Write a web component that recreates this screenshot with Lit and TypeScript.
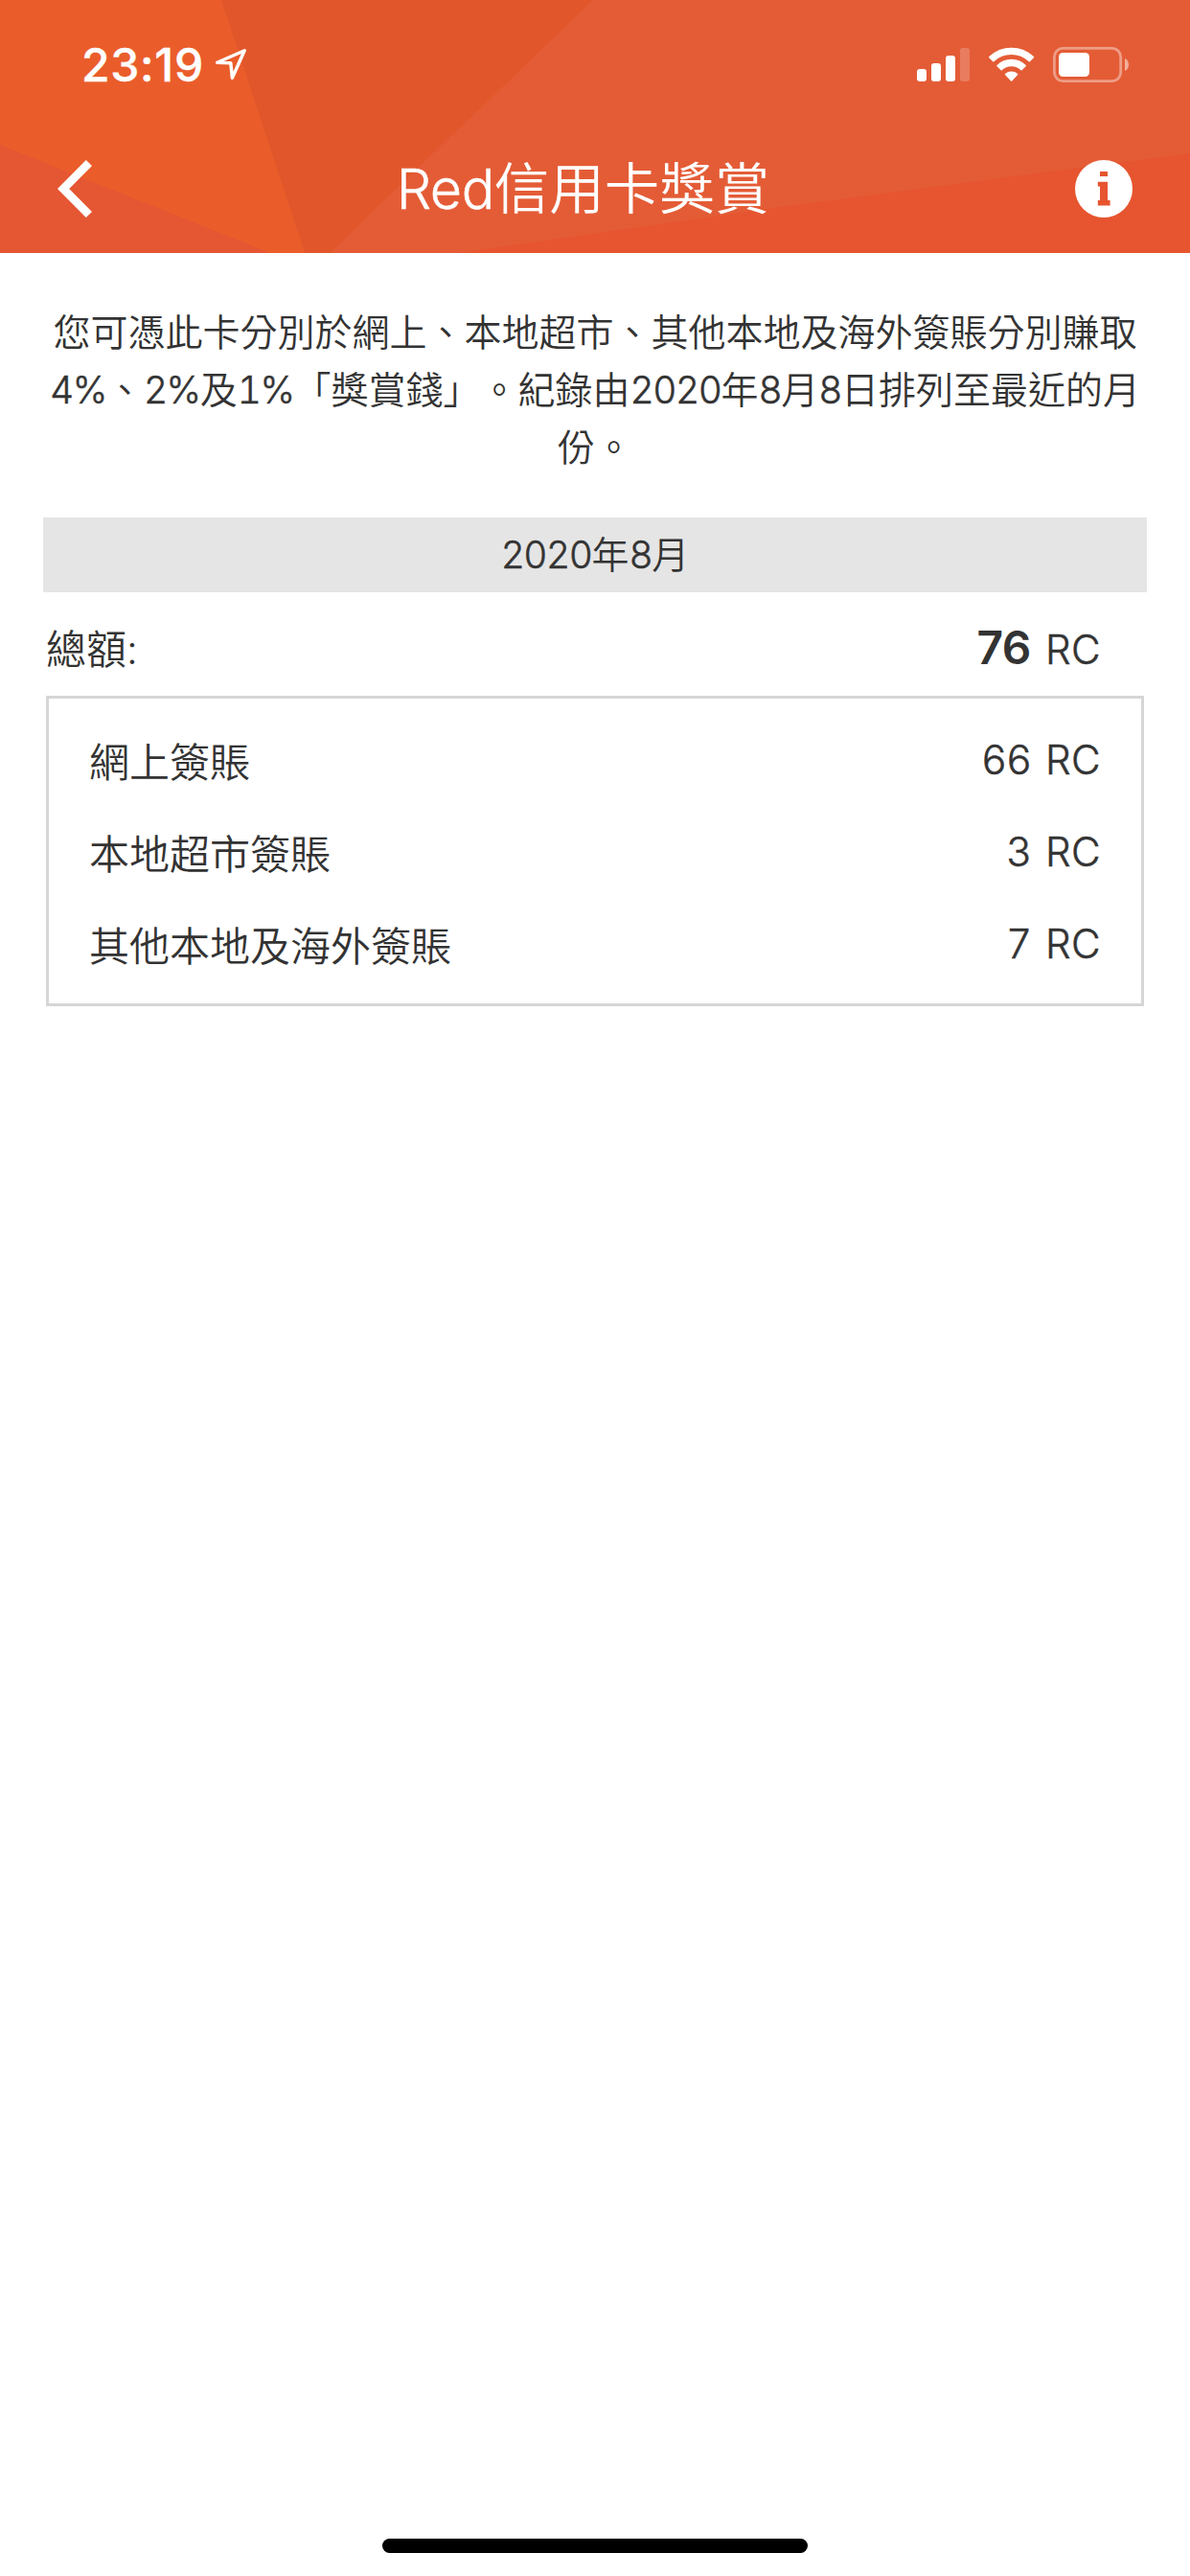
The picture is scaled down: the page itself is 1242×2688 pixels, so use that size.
import { LitElement, html, css, svg } from "lit";
import { customElement, property } from "lit/decorators.js";

interface RewardLine {
  label: string;
  amount: string;
}

const LINES: RewardLine[] = [
  { label: "網上簽賬", amount: "66" },
  { label: "本地超市簽賬", amount: "3" },
  { label: "其他本地及海外簽賬", amount: "7" },
];

@customElement("status-bar")
class StatusBar extends LitElement {
  static styles = css`
    :host {
      display: flex;
      justify-content: space-between;
      height: 132px;
      padding: 0 64px 0 85px;
      box-sizing: border-box;
      color: #fff;
    }
    .left {
      display: flex;
      align-items: flex-start;
    }
    .time {
      width: 139px;
      margin-top: 39px;
      font: 500 48px/58px Inter, "Liberation Sans", sans-serif;
      letter-spacing: 0.7px;
      white-space: nowrap;
      -webkit-text-stroke: 0.4px #fff;
    }
    .arrow {
      margin-top: 50px;
    }
    .icons {
      display: block;
      margin-top: 48px;
    }
  `;

  render() {
    return html`
      <div class="left">
        <span class="time">23:19</span>
        <svg class="arrow" width="34" height="34" viewBox="0 0 34 34" fill="none" stroke="#fff"
          stroke-width="3.4" stroke-linejoin="round">
          <path d="M31.2 2.8 L2.7 15.2 L16.8 15.8 L18.4 31.2 Z" />
        </svg>
      </div>
      <svg class="icons" width="221" height="40" viewBox="957 48 221 40">
        ${[
          [957, 72],
          [972, 66],
          [987, 58],
          [1002, 50],
        ].map(
          ([x, y], i) => svg`<rect x=${x} y=${y} width="10" height=${85 - y} rx="3"
            fill="#fff" opacity=${i === 3 ? 0.2 : 1} />`
        )}
        <g fill="#fff" stroke="#fff" stroke-width="1.6" stroke-linejoin="round">
          <path d="M1032.8 59.7 A33.2 33.2 0 0 1 1078.4 59.7 L1074.3 63.6 A27.2 27.2 0 0 0 1036.8 63.6 Z" />
          <path d="M1041.1 68.6 A20.7 20.7 0 0 1 1070.1 68.6 L1066 72.6 A15 15 0 0 0 1045.2 72.6 Z" />
          <path d="M1049.6 77.5 A9 9 0 0 1 1061.6 77.5 L1055.6 83.9 Z" />
        </g>
        <rect x="1100.4" y="50.4" width="69.3" height="34.2" rx="9" fill="none" stroke="#fff"
          stroke-width="2.8" opacity="0.4" />
        <rect x="1105" y="55" width="32" height="25" rx="4.5" fill="#fff" />
        <path d="M1174 61 C1179.3 63 1179.3 72 1174 74 Z" fill="#fff" opacity="0.5" />
      </svg>
    `;
  }
}

@customElement("nav-bar")
class NavBar extends LitElement {
  static styles = css`
    :host {
      display: grid;
      grid-template-columns: 200px 1fr 200px;
      align-items: center;
      height: 130px;
      padding: 0 60px;
      color: #fff;
    }
    .title {
      margin: 0;
      padding-right: 25px;
      text-align: center;
      font: 350 57.5px/86px Inter, "Noto Sans CJK TC", sans-serif;
      white-space: nowrap;
    }
    .latin {
      letter-spacing: -0.5px;
      -webkit-text-stroke: 0.5px #fff;
    }
    .info {
      justify-self: end;
    }
    svg {
      display: block;
    }
  `;

  @property() latin = "";
  @property() heading = "";

  render() {
    return html`
      <svg width="37" height="60" viewBox="0 0 37 60" fill="#fff">
        <path d="M29.8 0 L36 6 L12.2 30 L36 54 L29.8 60 L0 30 Z" />
      </svg>
      <h1 class="title"><span class="latin">${this.latin}</span>${this.heading}</h1>
      <svg class="info" width="60" height="60" viewBox="0 0 60 60">
        <circle cx="30" cy="30" r="30" fill="#fff" />
        <path fill="#e6552f"
          d="M26 11.9 H34 V17.1 H26 Z M23.8 22.7 H34 V42.1 H36.6 V47.6 H23.8 V42.1 H26 V27.6 H23.8 Z" />
      </svg>
    `;
  }
}

@customElement("app-root")
class AppRoot extends LitElement {
  static styles = css`
    :host {
      display: flex;
      flex-direction: column;
      width: 1242px;
      height: 2688px;
      background: #fff;
      color: #333;
      font-family: Inter, "Noto Sans CJK TC", sans-serif;
      font-weight: 360;
      text-spacing-trim: space-all;
      overflow: hidden;
    }
    .header {
      position: relative;
      height: 264px;
      flex: none;
    }
    .facets {
      position: absolute;
      inset: 0;
    }
    status-bar,
    nav-bar {
      position: relative;
    }
    .content {
      flex: 1;
      padding: 53px 45px 0;
    }
    .intro {
      margin: 0 0 43px;
      height: 180px;
      text-align: center;
      font-size: 39px;
      line-height: 60px;
      white-space: nowrap;
    }
    .num {
      font-variant-numeric: tabular-nums;
      letter-spacing: -1.5px;
      -webkit-text-stroke: 0.5px #333;
    }
    .month {
      height: 78px;
      background: #e5e5e5;
      text-align: center;
      font-size: 39px;
      line-height: 78px;
    }
    .row {
      display: flex;
      justify-content: space-between;
      align-items: flex-start;
      font-size: 42px;
      line-height: 60px;
    }
    .total {
      align-items: baseline;
      height: 60px;
      margin-top: 28px;
      padding: 0 48px 20px 3px;
    }
    .amount {
      display: flex;
      align-items: baseline;
      gap: 15px;
      font-variant-numeric: tabular-nums;
      letter-spacing: -1.2px;
      -webkit-text-stroke: 0.5px #333;
    }
    .unit {
      letter-spacing: 0.4px;
    }
    .box .amount {
      margin-top: -3px;
    }
    .total .amount {
      gap: 18px;
    }
    .sum {
      font-size: 48px;
      font-weight: 600;
      letter-spacing: -3.5px;
      -webkit-text-stroke: 0;
    }
    .box {
      display: grid;
      grid-auto-rows: 96px;
      align-items: center;
      height: 324px;
      box-sizing: border-box;
      margin: 0 3px;
      padding: 19px 42px 0;
      border: 3px solid #d6d6d6;
    }
    .home {
      width: 444px;
      height: 15px;
      margin: 0 auto 24px;
      border-radius: 8px;
      background: #000;
    }
  `;

  private latin(text: string) {
    return text
      .split(/([0-9%]+)/)
      .filter((part) => part !== "")
      .map((part) => (/[0-9%]/.test(part) ? html`<span class="num">${part}</span>` : part));
  }

  render() {
    return html`
      <header class="header">
        <svg class="facets" width="1242" height="264" viewBox="0 0 1242 264">
          <rect width="1242" height="264" fill="#ea5d2b" />
          <path d="M0 151 L282 264 H0 Z" fill="#e55632" />
          <path d="M231 0 H1242 V264 H318 Z" fill="#e1572b" />
          <path d="M619 0 H1242 V264 H345 L400 210 Z" fill="#e45c36" />
          <path d="M478 264 L822 215 L1242 160 V264 Z" fill="#e6552f" />
        </svg>
        <status-bar></status-bar>
        <nav-bar .latin=${"Red"} .heading=${"信用卡獎賞"}></nav-bar>
      </header>
      <main class="content">
        <p class="intro">
          您可憑此卡分別於網上、本地超市、其他本地及海外簽賬分別賺取<br />${this.latin(
            "4%、2%及1%「獎賞錢」。紀錄由2020年8月8日排列至最近的月"
          )}<br />份。
        </p>
        <div class="month">${this.latin("2020年8月")}</div>
        <div class="row total">
          <span>總額:</span>
          <span class="amount"><span class="sum">76</span><span class="unit">RC</span></span>
        </div>
        <section class="box">
          ${LINES.map(
            (l) => html`<div class="row">
              <span>${l.label}</span>
              <span class="amount"><span>${l.amount}</span><span class="unit">RC</span></span>
            </div>`
          )}
        </section>
      </main>
      <div class="home"></div>
    `;
  }
}
